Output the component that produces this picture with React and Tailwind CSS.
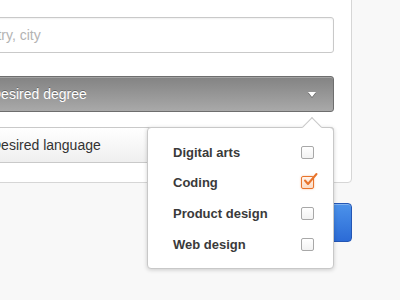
import { useState } from "react";

const options = ["Digital arts", "Coding", "Product design", "Web design"];

function Checkbox({ checked }) {
  if (checked) {
    return (
      <span className="relative block w-[13px] h-[13px] rounded-[2px] border border-[#e8742c] bg-gradient-to-b from-[#fff4ec] to-[#fbdcc6] shadow-[0_0_2px_rgba(232,116,44,0.5)]">
        <svg className="absolute left-[1px] top-[-5px]" width="15" height="15" viewBox="0 0 15 15" fill="none">
          <path d="M2 8.5 L5 12 L13.5 2" stroke="#e8742c" strokeWidth="2" strokeLinecap="round" strokeLinejoin="round" />
        </svg>
      </span>
    );
  }
  return (
    <span className="block w-[13px] h-[13px] rounded-[2px] border border-[#a8a8a8] bg-gradient-to-b from-white to-[#f2f2f2]" />
  );
}

export default function App() {
  const [selected, setSelected] = useState(["Coding"]);

  const toggle = (name) =>
    setSelected((prev) => (prev.includes(name) ? prev.filter((n) => n !== name) : [...prev, name]));

  return (
    <div className="w-[400px] h-[300px] overflow-hidden bg-[#f8f8f8] font-['Liberation_Sans',Arial,sans-serif]">
      {/* ===== FORM CARD ===== */}
      <div className="ml-[-60px] mt-[-20px] w-[412px] bg-white border border-[#d6d6d6] rounded-[4px] pt-[36px] pl-[9px] pr-[17px] pb-[19px]">
        <input
          type="text"
          placeholder="Country, city"
          className="block w-full h-[36px] mb-[23px] pl-[13px] rounded-[3px] border border-[#c9c9c9] bg-white text-[14px] text-[#333] placeholder:text-[#b3b3b3] shadow-[inset_0_1px_2px_rgba(0,0,0,0.06)] outline-none"
        />

        <div className="relative mb-[15px]">
          <div className="flex items-center justify-between h-[36px] pl-[40px] pr-[17px] rounded-[3px] border border-[#6e6e6e] bg-gradient-to-b from-[#838383] to-[#a9a9a9] shadow-[inset_0_1px_0_rgba(255,255,255,0.25)]">
            <span className="text-[14px] text-white [text-shadow:0_-1px_0_rgba(0,0,0,0.3)]">Desired degree</span>
            <svg width="8" height="5" viewBox="0 0 8 5" className="drop-shadow-[0_1px_0_rgba(0,0,0,0.35)]">
              <path d="M0 0 H8 L4 5 Z" fill="#ffffff" />
            </svg>
          </div>

          {/* ===== DROPDOWN MENU ===== */}
          <div className="absolute right-0 top-[calc(100%+15px)] z-10 w-[187px] bg-white border border-[#c8c8c8] rounded-[4px] shadow-[0_1px_4px_rgba(0,0,0,0.18)] pt-[9px] pb-[8px]">
            <span className="absolute right-[14px] top-[-8px] w-[14px] h-[14px] rotate-45 bg-white border-l border-t border-[#c8c8c8]" />
            {options.map((name) => (
              <button
                key={name}
                onClick={() => toggle(name)}
                className="relative flex items-center justify-between w-full h-[30.67px] pl-[25px] pr-[19px] text-left"
              >
                <span className="text-[13px] font-bold text-[#3a3a3a]">{name}</span>
                <Checkbox checked={selected.includes(name)} />
              </button>
            ))}
          </div>
        </div>

        <div className="flex items-center h-[36px] pl-[40px] rounded-[3px] border border-[#c9c9c9] bg-gradient-to-b from-white to-[#efefef]">
          <span className="text-[14px] text-[#333]">Desired language</span>
        </div>
      </div>

      {/* ===== SUBMIT ===== */}
      <div className="flex justify-end w-[352px] mt-[20px]">
        <button className="w-[140px] h-[39px] rounded-[4px] border border-[#2456b4] bg-gradient-to-b from-[#4c92ea] to-[#2c6bd6] shadow-[inset_0_1px_0_rgba(255,255,255,0.3)]" />
      </div>
    </div>
  );
}
